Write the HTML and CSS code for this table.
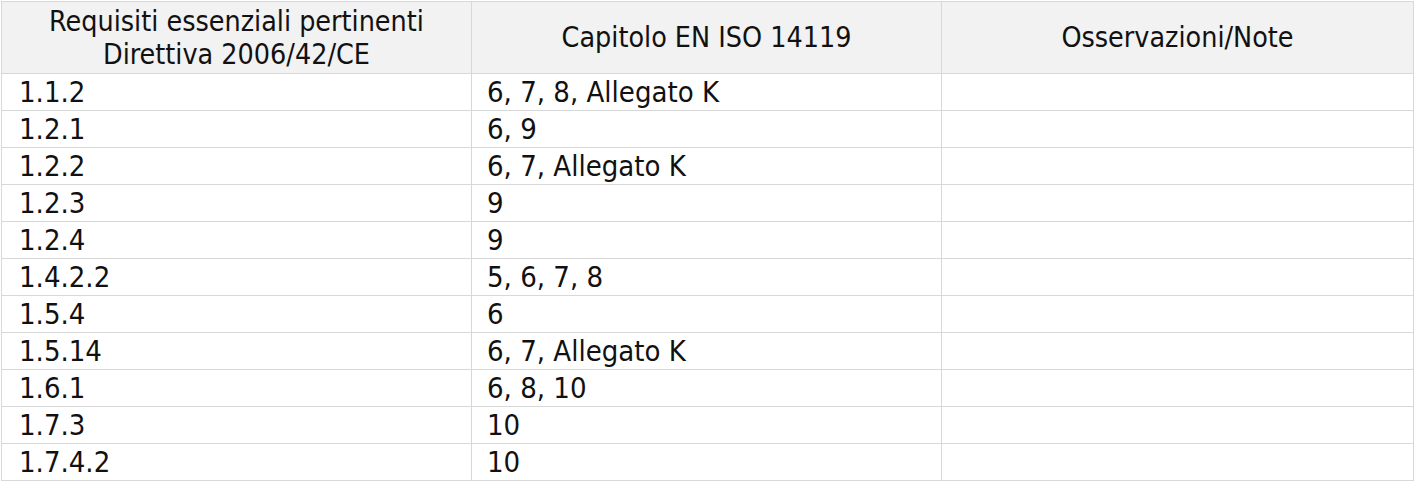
FILE: index.html
```html
<!DOCTYPE html>
<html lang="it">
<head>
<meta charset="utf-8">
<title>Requisiti essenziali</title>
<link rel="stylesheet" href="styles.css">
</head>
<body>
<table class="req-table">
  <colgroup>
    <col class="col-a">
    <col class="col-b">
    <col class="col-c">
  </colgroup>
  <thead>
    <tr>
      <th>Requisiti essenziali pertinenti<br>Direttiva 2006/42/CE</th>
      <th>Capitolo EN ISO 14119</th>
      <th>Osservazioni/Note</th>
    </tr>
  </thead>
  <tbody>
    <tr><td>1.1.2</td><td>6, 7, 8, Allegato K</td><td></td></tr>
    <tr><td>1.2.1</td><td>6, 9</td><td></td></tr>
    <tr><td>1.2.2</td><td>6, 7, Allegato K</td><td></td></tr>
    <tr><td>1.2.3</td><td>9</td><td></td></tr>
    <tr><td>1.2.4</td><td>9</td><td></td></tr>
    <tr><td>1.4.2.2</td><td>5, 6, 7, 8</td><td></td></tr>
    <tr><td>1.5.4</td><td>6</td><td></td></tr>
    <tr><td>1.5.14</td><td>6, 7, Allegato K</td><td></td></tr>
    <tr><td>1.6.1</td><td>6, 8, 10</td><td></td></tr>
    <tr><td>1.7.3</td><td>10</td><td></td></tr>
    <tr><td>1.7.4.2</td><td>10</td><td></td></tr>
  </tbody>
</table>
</body>
</html>
```
FILE: styles.css
```css
html, body {
  margin: 0;
  padding: 0;
  background: #ffffff;
}
body {
  padding: 1px 0 0 1px;
  font-family: "DejaVu Sans Condensed", "DejaVu Sans", sans-serif;
  color: #111111;
}
.req-table {
  border-collapse: collapse;
  table-layout: fixed;
  width: 1412px;
  font-size: 29px;
}
.col-a { width: 470px; }
.col-b { width: 470px; }
.col-c { width: 472px; }
.req-table th,
.req-table td {
  border: 1px solid #d8d8d8;
  padding: 0 16px;
  vertical-align: middle;
  white-space: nowrap;
}
.req-table th {
  background: #f2f2f2;
  font-weight: normal;
  text-align: center;
  height: 71px;
  line-height: 33px;
  font-size: 28.4px;
}
.req-table td {
  height: 36px;
  line-height: 36px;
  text-align: left;
  padding-left: 15px;
}
.req-table td:first-child {
  padding-left: 17px;
}
```
